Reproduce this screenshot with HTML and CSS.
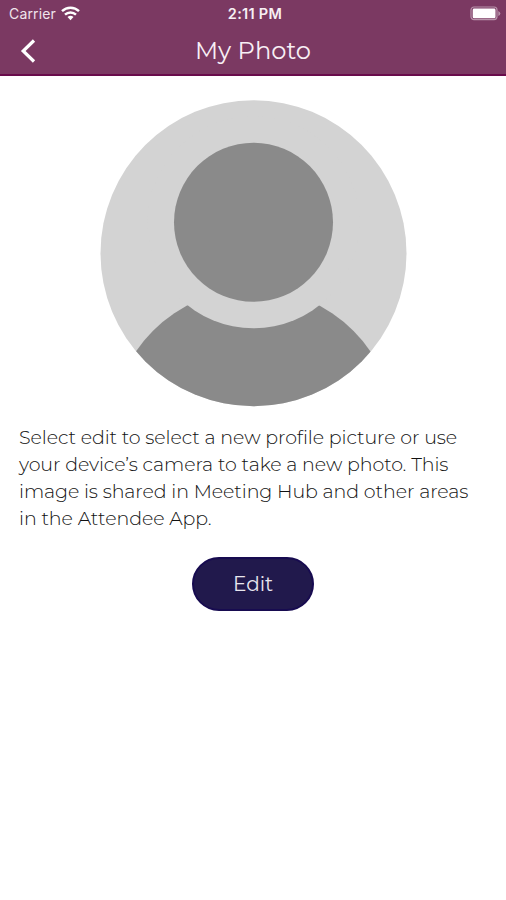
FILE: index.html
```html
<!DOCTYPE html>
<html lang="en">
<head>
    <meta charset="UTF-8">
    <meta name="viewport" content="width=device-width, initial-scale=1.0">
    <title>My Photo</title>
    <link rel="stylesheet" href="styles.css">
</head>
<body>
    <header class="header">
        <div class="status-bar">
            <div class="carrier">
                <span class="carrier-name">Carrier</span>
                <svg width="19" height="15" viewBox="0 0 19 15" fill="none" stroke="currentColor" stroke-width="2.4">
                    <path d="M1 5.2a12.2 12.2 0 0 1 17 0"/>
                    <path d="M4 8.7a7.9 7.9 0 0 1 11 0"/>
                    <path d="M9.5 14.2l-3-3.1a4.3 4.3 0 0 1 6 0z" fill="currentColor" stroke="none"/>
                </svg>
            </div>
            <span class="time">2:11 PM</span>
            <svg class="battery" width="31" height="15" viewBox="0 0 31 15">
                <rect x="1" y="1" width="26" height="12.6" rx="3" fill="none" stroke="#b893aa" stroke-width="1.2"/>
                <rect x="2.7" y="2.5" width="22.8" height="9.8" rx="1.4" fill="#fff"/>
                <path d="M28.3 5v5q2-1 2-2.5t-2-2.5z" fill="#b893aa"/>
            </svg>
        </div>
        <div class="nav-bar">
            <button class="back" aria-label="Back">
                <svg width="16" height="24" viewBox="0 0 16 24" fill="none" stroke="currentColor" stroke-width="3.2">
                    <path d="M14 1.5L3.2 12 14 22.5"/>
                </svg>
            </button>
            <h1 class="title">My Photo</h1>
        </div>
    </header>

    <main class="content">
        <svg class="avatar" width="307" height="307" viewBox="0 0 307 307">
            <clipPath id="round"><circle cx="153.5" cy="153.2" r="153"/></clipPath>
            <g clip-path="url(#round)">
                <rect width="307" height="307" fill="#d3d3d3"/>
                <circle cx="153.2" cy="331.3" r="142" fill="#8a8a8a"/>
                <circle cx="153.5" cy="122.3" r="106" fill="#d3d3d3"/>
                <circle cx="153.5" cy="122.3" r="79.5" fill="#8a8a8a"/>
            </g>
        </svg>

        <p class="description">
            Select edit to select a new profile picture or use<br>
            your device’s camera to take a new photo. This<br>
            image is shared in Meeting Hub and other areas<br>
            in the Attendee App.
        </p>

        <button class="edit">Edit</button>
    </main>
</body>
</html>
```

FILE: styles.css
```css
* {
    margin: 0;
    padding: 0;
    box-sizing: border-box;
}

body {
    font-family: Montserrat, Inter, sans-serif;
    min-height: 100vh;
    background: #fff;
    color: #111;
}

button {
    border: none;
    background: none;
    font-family: inherit;
    color: inherit;
    cursor: pointer;
}

.header {
    height: 76px;
    background: #7b3962;
    border-bottom: 2px solid #690b4b;
    color: #fff;
}

.status-bar {
    display: grid;
    grid-template-columns: 1fr auto 1fr;
    align-items: center;
    height: 26px;
    padding: 0 5px 0 9px;
    font-family: Inter, sans-serif;
}

.carrier {
    display: flex;
    align-items: center;
    gap: 5px;
}

.carrier-name {
    font-size: 14px;
    letter-spacing: 0.15px;
    color: #f0e4ec;
}

.time {
    font-size: 14.5px;
    font-weight: 600;
    letter-spacing: 0.3px;
    color: #f7f0f4;
}

.battery {
    justify-self: end;
}

.nav-bar {
    display: grid;
    grid-template-columns: 40px 1fr 40px;
    align-items: center;
    height: 49px;
}

.back {
    display: flex;
    padding-left: 20px;
}

.title {
    padding-bottom: 1px;
    text-align: center;
    font-size: 24.2px;
    font-weight: 400;
    color: #f8eff5;
}

.content {
    display: flex;
    flex-direction: column;
    align-items: center;
    padding-top: 24px;
}

.avatar {
    display: block;
}

.description {
    width: 100%;
    margin-top: 17px;
    padding-left: 19px;
    font-size: 19px;
    font-weight: 300;
    line-height: 27px;
    letter-spacing: -0.08px;
    white-space: nowrap;
}

.edit {
    width: 122px;
    height: 54px;
    margin-top: 25px;
    border: 2px solid #170b50;
    border-radius: 27px;
    background: #21194c;
    color: #e8e6ee;
    font-size: 20px;
}
```
